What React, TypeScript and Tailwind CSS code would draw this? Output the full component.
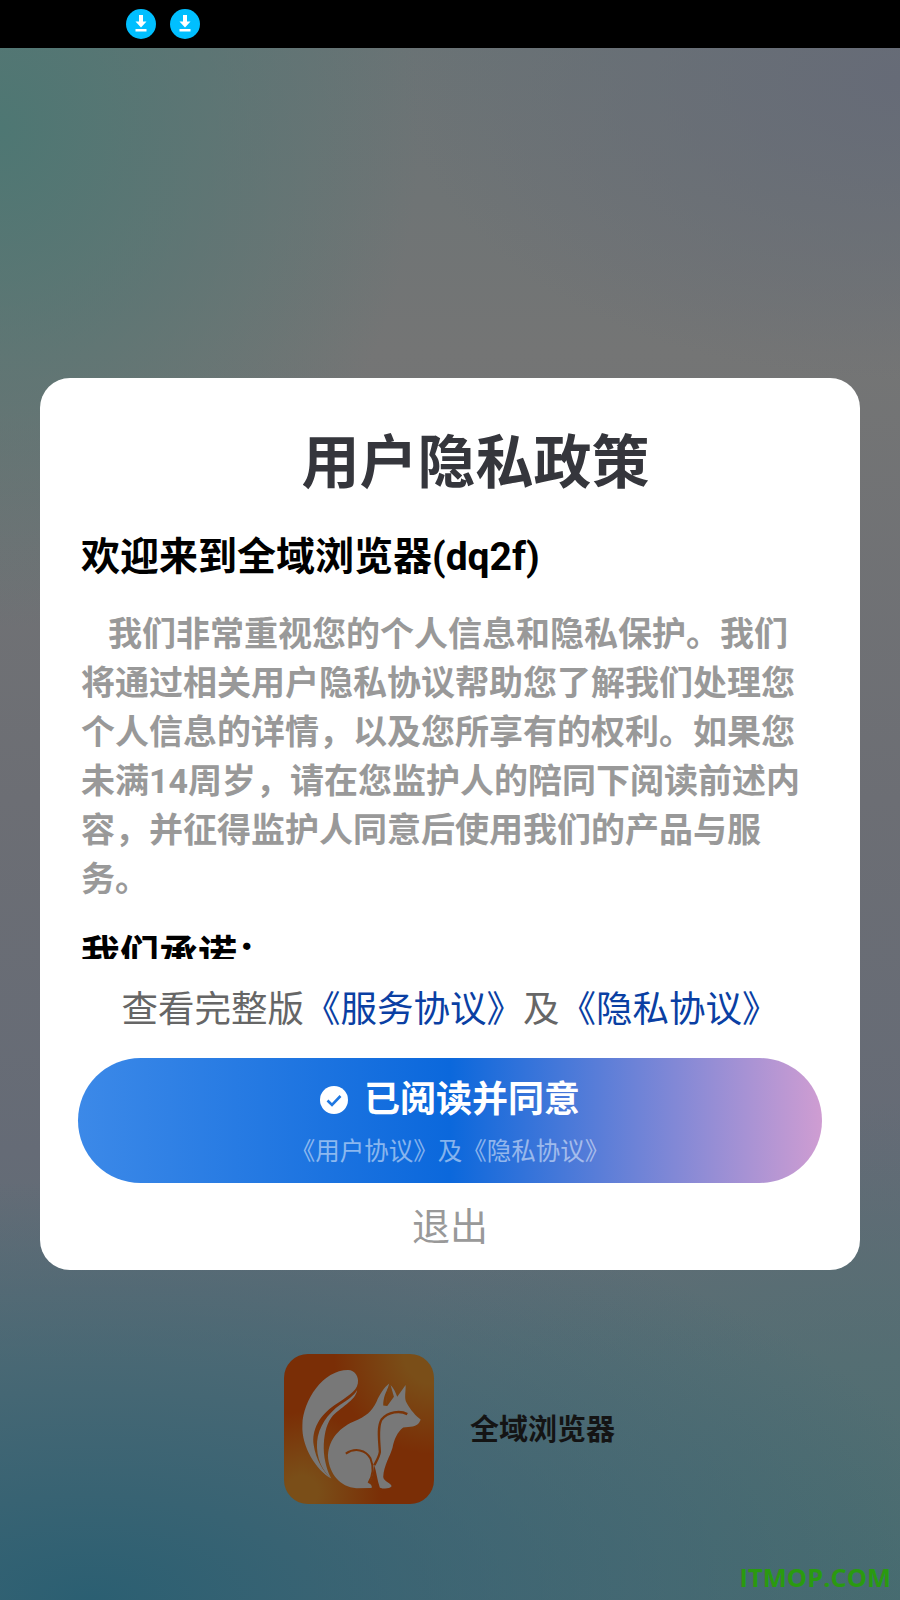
const cjk = "font-['Roboto','Noto_Sans_CJK_SC',sans-serif]";

function DownloadBadge() {
  return (
    <svg width="30" height="30" viewBox="0 0 30 30">
      <circle cx="15" cy="15" r="15" fill="#00bfff" />
      <path d="M13 6h4v6.500h3.500L15 18.500l-5.500-6H13z" fill="#fff" />
      <rect x="9.500" y="20" width="11" height="2.500" fill="#fff" />
    </svg>
  );
}

function CheckBadge() {
  return (
    <svg width="28" height="28" viewBox="0 0 28 28">
      <circle cx="14" cy="14" r="14" fill="#fff" />
      <path d="M7.500 14.500l4.500 4.500 8.500-9" fill="none" stroke="#1f78e2" strokeWidth="2.600" />
    </svg>
  );
}

function FoxLogo() {
  return (
    <div className="w-[150px] h-[150px] rounded-[24px] overflow-hidden bg-[#7a2e06] bg-[radial-gradient(circle_100px_at_100%_0%,#7a4e18_30%,rgba(122,78,24,0)_100%),radial-gradient(circle_80px_at_12%_92%,#7a4e18_20%,rgba(122,78,24,0)_100%)]">
      <svg width="150" height="150" viewBox="73 72 449 449">
        <path
          d="M265 120C285 120 298 140 294 160C290 185 260 200 225 225C180 255 155 300 162 345C168 385 190 425 215 445C170 420 125 350 128 285C130 210 190 120 265 120Z"
          fill="#787878"
        />
        <path
          d="M292 180C288 212 240 232 215 262C198 285 192 320 192 355C192 390 205 430 215 445C190 425 168 385 172 335C176 290 205 250 240 225C262 210 282 198 292 180Z"
          fill="#787878"
        />
        <path
          d="M205 385C202 335 235 295 280 275C320 258 335 245 350 215C358 195 372 172 388 160C382 180 376 205 382 228L402 200L392 165C402 175 408 190 412 200L437 165C438 185 432 205 440 218C452 240 468 258 482 268C478 280 470 288 452 290L430 292C412 305 402 330 398 352C390 380 372 405 370 440C372 455 395 458 395 468C390 476 370 476 360 472C352 450 350 425 343 405C340 425 338 445 326 458C334 462 338 468 335 473L290 474C240 470 210 430 205 385Z"
          fill="#787878"
        />
        <path
          d="M442 252C420 240 385 245 365 268C352 290 358 330 360 365C358 380 350 392 343 405"
          fill="none"
          stroke="#7a3408"
          strokeWidth="7"
        />
        <path
          d="M258 370C285 352 318 358 332 385C342 410 340 435 326 458"
          fill="none"
          stroke="#7a3408"
          strokeWidth="6"
        />
        <path d="M387 168C376 190 370 205 370 226L382 228C378 208 382 188 387 168Z" fill="#7a3d0c" />
      </svg>
    </div>
  );
}

export default function App() {
  return (
    <div
      className={`${cjk} relative w-[900px] h-[1600px] flex flex-col overflow-hidden bg-[radial-gradient(ellipse_420px_500px_at_0%_8%,#4e7773_0%,rgba(78,119,115,0)_100%),radial-gradient(ellipse_500px_300px_at_100%_5%,#666b77_0%,rgba(102,107,119,0)_100%),radial-gradient(ellipse_900px_420px_at_10%_100%,#2b5f72_0%,rgba(43,95,114,0)_100%),radial-gradient(ellipse_600px_500px_at_100%_100%,#4a6d70_0%,rgba(74,109,112,0)_100%),linear-gradient(180deg,#6a7375_3%,#747575_22%,#6c6e74_50%,#656b76_72%,#5f6f76_85%)]`}
    >
      <div className="h-12 bg-black flex items-center gap-[14px] pl-[126px]">
        <DownloadBadge />
        <DownloadBadge />
      </div>

      <div className="mt-[330px] mx-10 h-[892px] bg-white rounded-[30px] flex flex-col">
        <h1 className="mt-[50px] pl-[51px] text-center text-[58px] leading-[70px] font-bold text-[#35363c]">
          用户隐私政策
        </h1>

        <div className="h-[427px] shrink-0 mt-[34px] px-[41px] overflow-hidden">
          <h2 className="text-[39px] leading-[50px] font-bold text-black">欢迎来到全域浏览器(dq2f)</h2>
          <p className="mt-[28px] text-[34px] leading-[49px] font-bold text-[#999999] indent-[27px]">
            我们非常重视您的个人信息和隐私保护。我们将通过相关用户隐私协议帮助您了解我们处理您个人信息的详情，以及您所享有的权利。如果您未满14周岁，请在您监护人的陪同下阅读前述内容，并征得监护人同意后使用我们的产品与服务。
          </p>
          <h3 className="mt-[26px] text-[39px] leading-[50px] font-bold text-black">我们承诺：</h3>
        </div>

        <p className="mt-[26px] text-center text-[36.500px] leading-[50px] text-[#666666]">
          查看完整版<span className="text-[#0a3fa3]">《服务协议》</span>及<span className="text-[#0a3fa3]">《隐私协议》</span>
        </p>

        <button className="mt-[23px] mx-[38px] h-[125px] shrink-0 pt-1 rounded-full flex flex-col items-center justify-center gap-[9px] bg-[linear-gradient(90deg,#3c89e8_0%,#0b68dc_50%,#cf9dd2_100%)]">
          <span className="flex items-center gap-4 text-[36px] leading-[50px] font-bold text-white">
            <CheckBadge />
            已阅读并同意
          </span>
          <span className="text-[24.500px] leading-[36px] text-white/50">《用户协议》及《隐私协议》</span>
        </button>

        <p className="mt-[19px] text-center text-[38px] leading-[50px] text-[#999999]">退出</p>
      </div>

      <div className="mt-[84px] ml-[284px] flex items-center gap-9">
        <FoxLogo />
        <span className="mt-1 text-[29px] font-bold text-[#141414]">全域浏览器</span>
      </div>

      <span className="absolute right-[9px] bottom-[7px] font-['Open_Sans',sans-serif] text-[25.500px] leading-[32px] font-bold text-[#2a9a10]">
        ITMOP.COM
      </span>
    </div>
  );
}
